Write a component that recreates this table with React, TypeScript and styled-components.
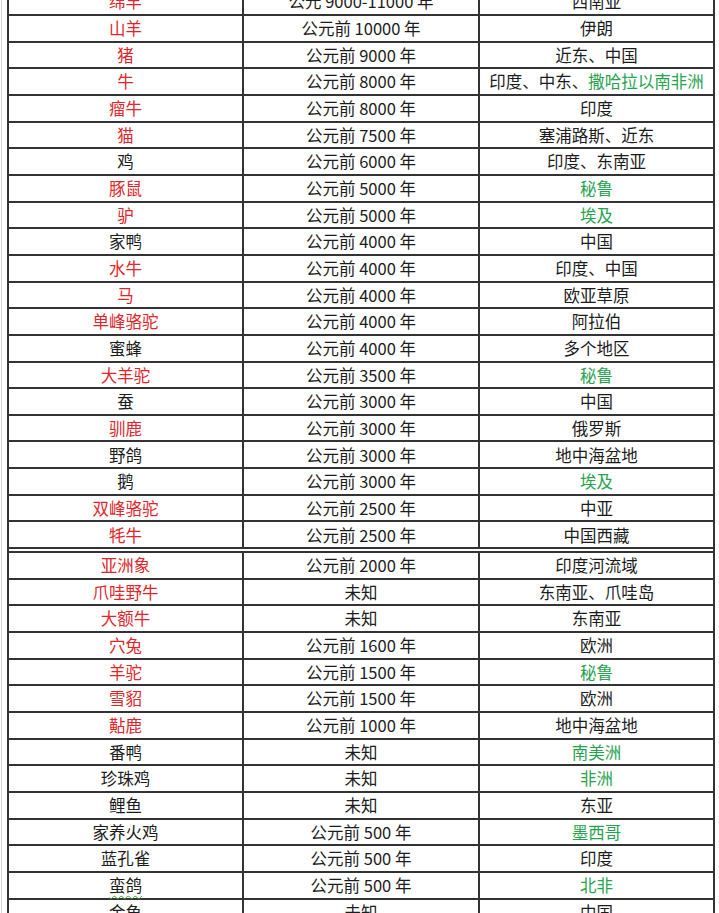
import styled, { createGlobalStyle, css } from 'styled-components'

const GlobalStyle = createGlobalStyle`
  html, body {
    margin: 0;
    padding: 0;
    background: #fff;
    overflow: hidden;
  }
  body {
    font-family: "Noto Sans CJK SC", "Noto Sans", sans-serif;
  }
`

type Tone = 'red' | 'green' | 'black'

const toneColor: Record<Tone, string> = {
  red: '#e0262a',
  green: '#27a34f',
  black: '#1c1c1c',
}

const Page = styled.div`
  height: 913px;
  border-left: 1px solid #d4d4d4;
  margin-left: 1px;
  overflow: hidden;
`

const Grid = styled.div<{ $top: number; $bottom: number }>`
  display: grid;
  grid-template-columns: 233px 234px 233px;
  grid-template-rows: ${({ $top, $bottom }) =>
    `repeat(${$top}, 24.67px) 2px repeat(${$bottom}, 24.67px)`};
  gap: 2px;
  padding: 2px;
  width: 704px;
  margin: -12.7px 0 0 5px;
  background: #333;
`

const Cell = styled.div<{ $tone?: Tone; $squiggle?: boolean }>`
  background: #fff;
  display: flex;
  align-items: center;
  justify-content: center;
  font-size: 16.5px;
  line-height: 1;
  white-space: nowrap;
  color: ${({ $tone }) => toneColor[$tone ?? 'black']};
  ${({ $squiggle }) =>
    $squiggle &&
    css`
      & > span {
        text-decoration: underline wavy #3aa33a;
        text-decoration-thickness: 1px;
        text-underline-offset: 3px;
      }
    `}
`

const Part = styled.span<{ $tone: Tone }>`
  color: ${({ $tone }) => toneColor[$tone]};
`

const Divider = styled.div`
  grid-column: 1 / -1;
  background: #fff;
`

type Place = string | [string, Tone][]

type Row = {
  name: string
  red?: boolean
  date: string
  place: Place
  squiggle?: boolean
}

const g = (s: string): [string, Tone][] => [[s, 'green']]

const top: Row[] = [
  { name: '绵羊', red: true, date: '公元 9000-11000 年', place: '西南亚' },
  { name: '山羊', red: true, date: '公元前 10000 年', place: '伊朗' },
  { name: '猪', red: true, date: '公元前 9000 年', place: '近东、中国' },
  {
    name: '牛',
    red: true,
    date: '公元前 8000 年',
    place: [
      ['印度、中东、', 'black'],
      ['撒哈拉以南非洲', 'green'],
    ],
  },
  { name: '瘤牛', red: true, date: '公元前 8000 年', place: '印度' },
  { name: '猫', red: true, date: '公元前 7500 年', place: '塞浦路斯、近东' },
  { name: '鸡', date: '公元前 6000 年', place: '印度、东南亚' },
  { name: '豚鼠', red: true, date: '公元前 5000 年', place: g('秘鲁') },
  { name: '驴', red: true, date: '公元前 5000 年', place: g('埃及') },
  { name: '家鸭', date: '公元前 4000 年', place: '中国' },
  { name: '水牛', red: true, date: '公元前 4000 年', place: '印度、中国' },
  { name: '马', red: true, date: '公元前 4000 年', place: '欧亚草原' },
  { name: '单峰骆驼', red: true, date: '公元前 4000 年', place: '阿拉伯' },
  { name: '蜜蜂', date: '公元前 4000 年', place: '多个地区' },
  { name: '大羊驼', red: true, date: '公元前 3500 年', place: g('秘鲁') },
  { name: '蚕', date: '公元前 3000 年', place: '中国' },
  { name: '驯鹿', red: true, date: '公元前 3000 年', place: '俄罗斯' },
  { name: '野鸽', date: '公元前 3000 年', place: '地中海盆地' },
  { name: '鹅', date: '公元前 3000 年', place: g('埃及') },
  { name: '双峰骆驼', red: true, date: '公元前 2500 年', place: '中亚' },
  { name: '牦牛', red: true, date: '公元前 2500 年', place: '中国西藏' },
]

const bottom: Row[] = [
  { name: '亚洲象', red: true, date: '公元前 2000 年', place: '印度河流域' },
  { name: '爪哇野牛', red: true, date: '未知', place: '东南亚、爪哇岛' },
  { name: '大额牛', red: true, date: '未知', place: '东南亚' },
  { name: '穴兔', red: true, date: '公元前 1600 年', place: '欧洲' },
  { name: '羊驼', red: true, date: '公元前 1500 年', place: g('秘鲁') },
  { name: '雪貂', red: true, date: '公元前 1500 年', place: '欧洲' },
  { name: '黇鹿', red: true, date: '公元前 1000 年', place: '地中海盆地' },
  { name: '番鸭', date: '未知', place: g('南美洲') },
  { name: '珍珠鸡', date: '未知', place: g('非洲') },
  { name: '鲤鱼', date: '未知', place: '东亚' },
  { name: '家养火鸡', date: '公元前 500 年', place: g('墨西哥') },
  { name: '蓝孔雀', date: '公元前 500 年', place: '印度' },
  { name: '蛮鸽', date: '公元前 500 年', place: g('北非'), squiggle: true },
  { name: '金鱼', date: '未知', place: '中国' },
]

function renderRow(r: Row) {
  return [
    <Cell key={r.name + '-n'} $tone={r.red ? 'red' : 'black'} $squiggle={r.squiggle}>
      <span>{r.name}</span>
    </Cell>,
    <Cell key={r.name + '-d'}>{r.date}</Cell>,
    <Cell key={r.name + '-p'}>
      {typeof r.place === 'string'
        ? r.place
        : r.place.map(([t, tone]) => (
            <Part key={t} $tone={tone}>
              {t}
            </Part>
          ))}
    </Cell>,
  ]
}

function App() {
  return (
    <Page>
      <GlobalStyle />
      <Grid $top={top.length} $bottom={bottom.length}>
        {top.flatMap(renderRow)}
        <Divider />
        {bottom.flatMap(renderRow)}
      </Grid>
    </Page>
  )
}

export default App
